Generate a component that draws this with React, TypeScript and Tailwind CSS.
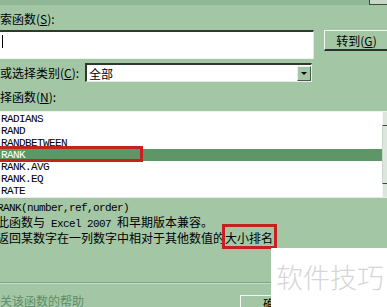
import React from 'react'

const cjk = '[font-family:"Noto_Sans_CJK_SC","Noto_Sans",sans-serif]'
const mono = 'font-["Liberation_Mono",monospace] text-[11px] tracking-[-0.6px]'

const functions = ['RADIANS', 'RAND', 'RANDBETWEEN', 'RANK', 'RANK.AVG', 'RANK.EQ', 'RATE']

function Key({ k }: { k: string }) {
  return (
    <span>
      (<span className="underline underline-offset-1">{k}</span>):
    </span>
  )
}

export default function App() {
  return (
    <div
      className={`relative w-[387px] h-[307px] overflow-hidden bg-[#a3c7a5] text-[12px] leading-[13px] text-black ${cjk}`}
    >
      {/* title strip */}
      <div className="h-[5px] bg-[#8fb695] flex justify-end">
        <div className="w-[18px] h-[5px] border-l border-b border-[#3d4a3e] bg-[#c8d8c8]" />
      </div>

      <div className="h-[25px] pt-[7px]">
        索函数<Key k="S" />
      </div>

      {/* search row */}
      <div className="flex items-start h-[29px]">
        <div className="shrink-0 w-[314px] h-[29px] bg-white border-t-2 border-t-[#303830] border-r border-r-[#dfe9df] border-b border-b-[#eef4ee] flex items-start pl-[2px] pt-[3px]">
          <div className="w-px h-[13px] bg-black" />
        </div>
        <div className="shrink-0 ml-[10px] w-[70px] h-[21px] border-t border-l border-[#f2f7f2] border-r-2 border-b-2 border-r-[#2a322a] border-b-[#2a322a] flex items-center justify-center pr-[4px]">
          转到(<span className="underline underline-offset-1">G</span>)
        </div>
      </div>

      {/* category row */}
      <div className="mt-[4px] flex items-center h-[19px]">
        <div className="w-[85px] shrink-0 whitespace-nowrap">
          或选择类别<Key k="C" />
        </div>
        <div className="shrink-0 w-[227px] h-[19px] bg-white border-t-2 border-l-2 border-[#303830] border-b border-r border-b-[#e6eee6] border-r-[#e6eee6] flex items-center justify-between">
          <span className="pl-[2px]">全部</span>
          <div className="w-[14px] h-[15px] bg-[#a3c7a5] border-t border-l border-[#e8f0e8] border-r border-b border-r-[#4a5a4a] border-b-[#4a5a4a] flex items-center justify-center">
            <div className="w-0 h-0 border-l-[3px] border-r-[3px] border-t-[3px] border-l-transparent border-r-transparent border-t-black" />
          </div>
        </div>
      </div>

      <div className="h-[29px] pt-[8px]">
        择函数<Key k="N" />
      </div>

      {/* function list */}
      <div className="flex h-[86px] border-t border-[#eaf2ea]">
        <div className="relative flex-1 bg-white pt-[1px]">
          {functions.map((f) => (
            <div
              key={f}
              className={`h-[12px] leading-[12px] pl-px ${mono} ${f === 'RANK' ? 'bg-[#5f9667] text-white' : 'text-black'}`}
            >
              {f}
            </div>
          ))}
          <div className="absolute left-[-3px] top-[34px] w-[146px] h-[16px] border-[3px] border-[#c4221f]" />
        </div>
        <div className="w-[5px] bg-[#dce6dc] flex flex-col">
          <div className="h-[14px] border-b border-[#3a443a] border-l border-l-[#f4f8f4]" />
          <div className="flex-1 border-l border-[#c9d6c9]" />
          <div className="h-[14px] border-t border-[#3a443a] border-l border-l-[#f4f8f4]" />
        </div>
      </div>
      <div className="h-px bg-[#e4eee4]" />

      {/* description */}
      <div className="mt-[4px] ml-[-3px] whitespace-nowrap">
        <div className={`${mono} leading-[13px]`}>RANK(number,ref,order)</div>
        <div className="leading-[13px]">
          此函数与<span className={mono}> Excel 2007 </span>和早期版本兼容。
        </div>
        <div className="leading-[13px] flex">
          返回某数字在一列数字中相对于其他数值的
          <span className="relative">
            大小排名
            <span className="absolute left-[-3px] right-[-4px] top-[-7px] bottom-[-5px] border-[3px] border-[#c4221f]" />
          </span>
        </div>
      </div>

      {/* separator */}
      <div className="mt-[38px] h-px bg-[#7fa585]" />
      <div className="h-px bg-[#c4dcc6]" />

      {/* footer */}
      <div className="flex items-start mt-[10px]">
        <div className="shrink-0 text-[#5f8d68] underline underline-offset-2 decoration-[#6f9a76]">关该函数的帮助</div>
        <div className="shrink-0 ml-[156px] mt-[1px] w-[80px] h-[20px] border-t border-l border-[#f2f7f2] pl-[22px] pt-[1px]">确定</div>
      </div>

      {/* watermark */}
      <div className="absolute left-[271px] top-[248px] w-[116px] h-[59px] bg-white flex items-start justify-center pt-[15px] pl-[2px]">
        <span className="text-[27px] leading-[28px] font-light text-[#d6d6d6] whitespace-nowrap">软件技巧</span>
      </div>
    </div>
  )
}
